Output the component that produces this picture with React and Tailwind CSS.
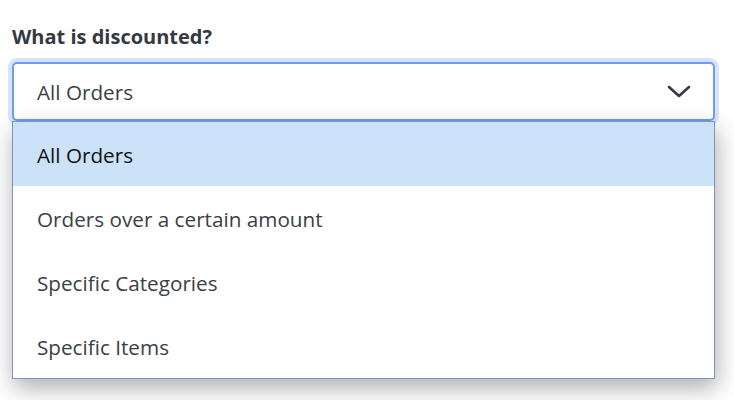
import React, { useState } from 'react';

const options = ['All Orders', 'Orders over a certain amount', 'Specific Categories', 'Specific Items'];

const App = () => {
    const [selected, setSelected] = useState(0);

    return (
        <div className="min-h-screen bg-white px-3 pt-[23px]" style={{ fontFamily: '"Open Sans", "Noto Sans", sans-serif' }}>
            <label className="block text-[20px] font-bold text-[#343a40] leading-[28px] mb-[11px]">
                What is discounted?
            </label>
            <div className="relative w-[703px]">
                <button className="w-full h-[59px] flex items-center justify-between pl-[23px] pr-[22px] pt-[3px] bg-white border-2 border-[#6f9bf7] rounded-[5px] ring-4 ring-[#d7e4fd] text-[20.7px] text-[#3a4046]">
                    <span>{options[selected]}</span>
                    <svg className="h-[24px] w-[24px] -mt-[3px] text-[#343a40]" viewBox="0 0 24 24" fill="none" stroke="currentColor">
                        <path d="M2 7 L12 16 L22 7" strokeWidth={2.6} strokeLinecap="round" strokeLinejoin="round" />
                    </svg>
                </button>
                <ul className="absolute left-0 top-[59px] w-full bg-white border border-[#7b93c9] shadow-[2px_9px_22px_rgba(0,0,0,0.32)]">
                    {options.map((opt, i) => (
                        <li
                            key={opt}
                            onClick={() => setSelected(i)}
                            className={"h-[64px] flex items-center pl-[24px] pt-[3px] text-[20.7px] " + (i === selected ? "bg-[#cbe2f9] text-[#111]" : "text-[#3a4046]")}
                        >
                            {opt}
                        </li>
                    ))}
                </ul>
            </div>
        </div>
    );
};

export default App;
